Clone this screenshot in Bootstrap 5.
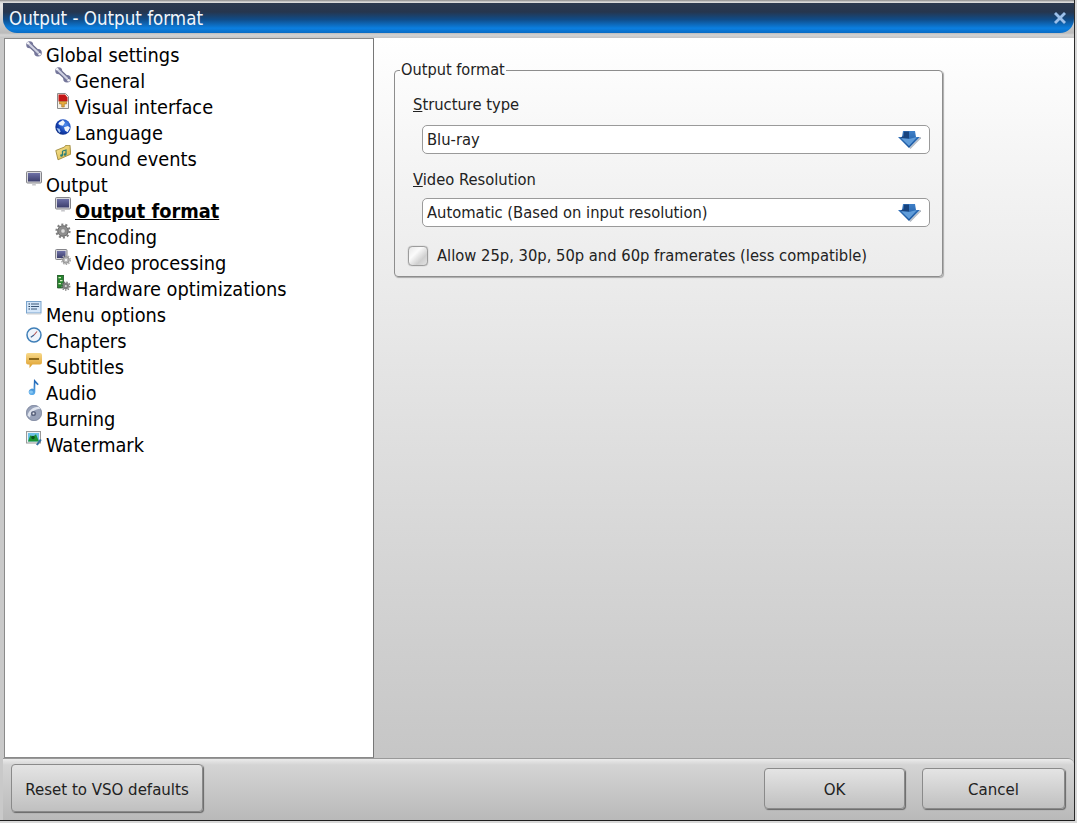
<!DOCTYPE html>
<html lang="en">
<head>
<meta charset="utf-8">
<title>Output - Output format</title>
<link href="https://cdn.jsdelivr.net/npm/bootstrap@5.3.0/dist/css/bootstrap.min.css" rel="stylesheet">
<style>
html,body{height:100%;overflow:hidden}
body{background:#d8d8d8;font-family:"DejaVu Sans Condensed","DejaVu Sans",sans-serif;color:#111}
.shell{width:1075px;height:821px;background:#c9c9c9;border-right:1px solid #2a2a2a;border-bottom:1px solid #1c1c1c}
.cap-wrap{height:38px;padding:3px 0 0 3px;background:linear-gradient(#8a8a8a 0,#d8d8d8 2px,#e6e6e6 5px,#bbb 33px,#d4d4d4 35px,#c4c4c4 38px)}
.cap{height:30px;border-radius:0 0 14px 14px;background:linear-gradient(#2c3a50 0,#26364e 30%,#104c88 55%,#0b7fe0 84%,#0a6cc4 100%);color:#f2f6fb;font-size:18.6px;padding:2px 6px 0 6px}
.closer{width:16px;height:16px;margin-top:-3px}
.mainrow{height:720px}
.treepane{width:370px;margin-left:4px;background:#fff;border:1px solid #8a8a8a;border-right:1px solid #777;padding-top:3px;font-size:19.8px;color:#000}
.treerow{height:26px;padding-left:21px;align-items:flex-start}
.treesub{padding-left:50px}
.treerow svg{width:16px;height:16px;margin-right:4px;margin-top:-1px;flex:none}
.treerow span{line-height:26px;margin-top:1px}
.cur{font-weight:700;text-decoration:underline;color:#000}
.sidepane{background:linear-gradient(#fff 0,#f3f3f3 20%,#c6c6c6 100%);padding:23px 0 0 20px}
.grp{width:549px;height:216px;border:1px solid #8d8d8d;border-radius:4px;box-shadow:1px 1px 1px #aaa;padding:0 13px 0 18px;margin:0;font-size:16.4px}
.grp legend{float:none;width:auto;font-size:16.2px;line-height:18px;margin:0 0 0 -13px;padding:0 1px;color:#222}
.fieldlabel{line-height:20px;color:#222}
.lab1{margin-top:16px}
.lab2{margin-top:16px}
.combo{height:29px;margin:10px 0 0 9px;border:1px solid #9a9a9a;border-radius:5px;background:#fff;padding:0 8px 0 4px;color:#222;min-height:0;width:508px}
.combo2{margin-top:8px}
.combotext{padding-top:1px;display:block}
.combo svg{width:24px;height:20px}
.chkline{margin:17px 0 0 -5px;gap:9px;color:#222}
.chkbox{width:20px;height:20px;margin:0;border:1.5px solid #9c9c9c;border-radius:4px;background:linear-gradient(135deg,#e6e6e6 0,#fbfbfb 35%,#cfcfcf 70%,#e2e2e2 100%);box-shadow:0 0 1px #888}
.bar{height:62px;background:linear-gradient(#ebebeb 0,#d4d4d4 6px,#b9b9b9 100%);border-top:1px solid #999;border-radius:0 6px 0 0;margin-left:3px;padding:0 9px 4px 8px}
.wbtn{font-size:16.7px;color:#222;background:linear-gradient(#e4e4e4,#c0c0c0);border:1px solid #8a8a8a;border-radius:4px;box-shadow:1px 1px 1px #666;padding:5px 0 0}
.wbtn:hover{background:linear-gradient(#e4e4e4,#c0c0c0);color:#222;border-color:#8a8a8a}
.reset{width:192px;height:48px}
.act{width:141px;height:41px;margin-top:2px;padding-top:3px}
.act2{width:143px}
.actgap{gap:17px}
</style>
</head>
<body>
<svg width="0" height="0" class="d-block position-absolute" aria-hidden="true">
<defs>
<linearGradient id="ga" x1="0" y1="0" x2="0" y2="1"><stop offset="0" stop-color="#3f80c8"/><stop offset="1" stop-color="#17539c"/></linearGradient>
<linearGradient id="gs" x1="0" y1="0" x2="0" y2="1"><stop offset="0" stop-color="#6d70a6"/><stop offset="1" stop-color="#3c3e6c"/></linearGradient>
<radialGradient id="gg" cx=".65" cy=".35" r=".8"><stop offset="0" stop-color="#4f8ef0"/><stop offset=".6" stop-color="#1440b0"/><stop offset="1" stop-color="#0b2470"/></radialGradient>
<linearGradient id="gf" x1="0" y1="0" x2="1" y2="1"><stop offset="0" stop-color="#f8e89a"/><stop offset="1" stop-color="#d8b040"/></linearGradient>
<linearGradient id="gb" x1="0" y1="0" x2="0" y2="1"><stop offset="0" stop-color="#f8d98a"/><stop offset="1" stop-color="#dc9c28"/></linearGradient>
<linearGradient id="gn" x1="0" y1="0" x2="0" y2="1"><stop offset="0" stop-color="#1a5fb0"/><stop offset="1" stop-color="#62b2ee"/></linearGradient>
<symbol id="wrench" viewBox="0 0 16 16"><path d="M3.500 3.500 12 11.500" stroke="#6a6c8c" stroke-width="4.600" stroke-linecap="round"/><circle cx="3.700" cy="3.700" r="3.500" fill="#74769a"/><circle cx="12" cy="11.800" r="3.800" fill="#74769a"/><path d="M3.500 3.500 12 11.500" stroke="#cfd1e2" stroke-width="2.200" stroke-linecap="round"/><circle cx="2.200" cy="2.200" r="1.300" fill="#f4f4f8"/><circle cx="13.600" cy="13.300" r="1.300" fill="#f4f4f8"/></symbol>
<symbol id="paint" viewBox="0 0 16 16"><path d="M2.500 .5h8l3 3v12h-11z" fill="#f4f0e8" stroke="#8d8d8d"/><path d="M3.500 1.500h6.500l2.500 3v4h-9z" fill="#c41616"/><path d="M4.500 8.500h7v2.500H9.300v3H6.700v-3H4.500z" fill="#e6aa3c" stroke="#95641a" stroke-width=".5"/></symbol>
<symbol id="globe" viewBox="0 0 16 16"><circle cx="8" cy="8" r="7.700" fill="url(#gg)"/><path d="M4 3.500 8 1l2 2.500-2 3.300L5.300 6.300 3.300 5zM9 8.300l4-1.300 2 1.700-2.500 4.500L10 11.500z" fill="#f0f5fc"/><path d="M1.500 9l3 .8 1.200 3-1.500 1z" fill="#a5c6f2"/></symbol>
<symbol id="folder" viewBox="0 0 16 16"><path d="M.8 5.500 9.500 2l1-1.500L15 .2l.7 9L3 14.800z" fill="url(#gf)" stroke="#9f8a3a" stroke-width=".9"/><path d="M7.500 6l3.500-1v4.500M7.500 6v4.500" stroke="#2b7f78" stroke-width="1.200" fill="none"/><circle cx="6.500" cy="10.500" r="1.300" fill="#2b7f78"/><circle cx="10" cy="9.500" r="1.300" fill="#2b7f78"/></symbol>
<symbol id="screen" viewBox="0 0 16 16"><rect x=".5" y=".5" width="15" height="11.500" rx="1" fill="#d8d8dc" stroke="#85858a"/><rect x="2" y="2" width="12" height="8.500" fill="url(#gs)"/><path d="M6.500 12h3l.5 2.500H6z" fill="#c6c6ca"/></symbol>
<symbol id="gear" viewBox="0 0 16 16"><circle cx="8" cy="8" r="5.300" fill="#8f8f8f" stroke="#666"/><circle cx="8" cy="8" r="6.400" fill="none" stroke="#808080" stroke-width="2.400" stroke-dasharray="2 1.960"/><circle cx="8" cy="8" r="2.200" fill="#dcdcdc" stroke="#777" stroke-width=".5"/></symbol>
<symbol id="screengear" viewBox="0 0 16 16"><rect x=".5" y=".5" width="11.500" height="10" rx="1" fill="#d8d8dc" stroke="#85858a"/><rect x="2" y="2" width="8.500" height="7" fill="url(#gs)"/><circle cx="11" cy="11" r="3.300" fill="#b6b6b6" stroke="#8b8b8b"/><circle cx="11" cy="11" r="4.300" fill="none" stroke="#a6a6a6" stroke-width="1.400" stroke-dasharray="1.500 1.200"/><circle cx="11" cy="11" r="1.200" fill="#f2f2f2"/></symbol>
<symbol id="chip" viewBox="0 0 16 16"><path d="M2.500 0h6v9l-1 4h-5z" fill="#27842f" stroke="#173f1b" stroke-width=".7"/><path d="M3.500 2h2.500v1.200H3.500zM5 5h2.500v1.200H5zM3.500 8H6v1.200H3.500z" fill="#d6ecbd"/><circle cx="10.800" cy="11" r="3.200" fill="#7e7e7e"/><circle cx="10.800" cy="11" r="4" fill="none" stroke="#777" stroke-width="1.300" stroke-dasharray="1.500 1.200"/><circle cx="10.800" cy="11" r="1.100" fill="#ddd"/></symbol>
<symbol id="menuic" viewBox="0 0 16 16"><rect x=".5" y=".5" width="14.500" height="11.500" fill="#d4e6f9" stroke="#7aa4cc"/><path d="M2.500 3h1.500M2.500 5.500h1.500M2.500 8h1.500" stroke="#24405f"/><path d="M5 3h8M5 5.500h8M5 8h6" stroke="#3c5878"/><path d="M1 13h14" stroke="#d0d0d0"/></symbol>
<symbol id="clock" viewBox="0 0 16 16"><circle cx="8" cy="8" r="7" fill="#eef4fb" stroke="#3f7fb8" stroke-width="1.500"/><path d="M8 8l3-3.500" stroke="#b05050" stroke-width="1.100"/><path d="M8 8 4.800 10.300" stroke="#3d5f8c" stroke-width="1.100"/></symbol>
<symbol id="bubble" viewBox="0 0 16 16"><path d="M2 0h12a2 2 0 0 1 2 2v7.500a2 2 0 0 1-2 2H6.500l-3 3.500v-3.500H2a2 2 0 0 1-2-2V2a2 2 0 0 1 2-2z" fill="url(#gb)"/><rect x="3" y="5" width="10" height="2" fill="#8a6618"/></symbol>
<symbol id="note" viewBox="0 0 16 16"><path d="M8 0l4.800 5.300-1.300 1L9.300 4v9a3.300 3.300 0 1 1-1.800-3z" fill="url(#gn)"/><ellipse cx="5" cy="13" rx="2" ry="1.500" fill="#86c6f2"/></symbol>
<symbol id="disc" viewBox="0 0 16 16"><circle cx="8" cy="8" r="7.700" fill="#98a2b9" stroke="#6e7892" stroke-width=".7"/><path d="M1.500 10.500C2.500 6 7 1.500 13 1.800l1.300 2C9 4 5 7 4 12.500z" fill="#e0e5ef"/><circle cx="7.500" cy="8.500" r="2.600" fill="#5f6882"/><circle cx="7.500" cy="8.500" r="1" fill="#e2e6ec"/></symbol>
<symbol id="water" viewBox="0 0 16 16"><rect x=".5" y=".5" width="14" height="11.500" fill="#eef3f6" stroke="#9a9a9a"/><rect x="2" y="2" width="11" height="8.500" fill="#6cc2e6"/><path d="M2 10.500l2.200-6 3.300.8 2.500-2 3 7.200z" fill="#1d9434"/><circle cx="7" cy="6.500" r="1.700" fill="#0a5218"/><path d="M10 13.500l4-5.500 1.700 1-4 5.500z" fill="#33709f"/></symbol>
<symbol id="drop" viewBox="0 0 24 20"><path d="M6 1h12l1 6h4L12 18 1 7h4z" fill="url(#ga)"/><path d="M7 1.500h5v7H3.500l1.500-2h1.500z" fill="#17437e"/><path d="M12 9l8-2-8 9-8-8z" fill="#6aa6e0" opacity=".85"/><path d="M13 18.500l11-11" stroke="#8b97a5" stroke-width="1.200" opacity=".7"/></symbol>
</defs>
</svg>
<div class="shell d-flex flex-column">
  <div class="cap-wrap">
    <div class="cap d-flex align-items-center justify-content-between">
      <span>Output - Output format</span>
      <svg class="closer" viewBox="0 0 16 16" aria-hidden="true"><path d="M2 4l2-2 4 4 4-4 2 2-4 4 4 4-2 2-4-4-4 4-2-2 4-4z" fill="#9cc0ea"/></svg>
    </div>
  </div>
  <div class="mainrow d-flex">
    <div class="treepane flex-shrink-0">
      <div class="treerow d-flex"><svg><use href="#wrench"/></svg><span>Global settings</span></div>
      <div class="treerow treesub d-flex"><svg><use href="#wrench"/></svg><span>General</span></div>
      <div class="treerow treesub d-flex"><svg><use href="#paint"/></svg><span>Visual interface</span></div>
      <div class="treerow treesub d-flex"><svg><use href="#globe"/></svg><span>Language</span></div>
      <div class="treerow treesub d-flex"><svg><use href="#folder"/></svg><span>Sound events</span></div>
      <div class="treerow d-flex"><svg><use href="#screen"/></svg><span>Output</span></div>
      <div class="treerow treesub d-flex"><svg><use href="#screen"/></svg><span class="cur">Output format</span></div>
      <div class="treerow treesub d-flex"><svg><use href="#gear"/></svg><span>Encoding</span></div>
      <div class="treerow treesub d-flex"><svg><use href="#screengear"/></svg><span>Video processing</span></div>
      <div class="treerow treesub d-flex"><svg><use href="#chip"/></svg><span>Hardware optimizations</span></div>
      <div class="treerow d-flex"><svg><use href="#menuic"/></svg><span>Menu options</span></div>
      <div class="treerow d-flex"><svg><use href="#clock"/></svg><span>Chapters</span></div>
      <div class="treerow d-flex"><svg><use href="#bubble"/></svg><span>Subtitles</span></div>
      <div class="treerow d-flex"><svg><use href="#note"/></svg><span>Audio</span></div>
      <div class="treerow d-flex"><svg><use href="#disc"/></svg><span>Burning</span></div>
      <div class="treerow d-flex"><svg><use href="#water"/></svg><span>Watermark</span></div>
    </div>
    <div class="sidepane flex-grow-1">
      <fieldset class="grp">
        <legend>Output format</legend>
        <div class="fieldlabel lab1"><u>S</u>tructure type</div>
        <div class="combo d-flex align-items-center justify-content-between"><span class="combotext">Blu-ray</span><svg><use href="#drop"/></svg></div>
        <div class="fieldlabel lab2"><u>V</u>ideo Resolution</div>
        <div class="combo combo2 d-flex align-items-center justify-content-between"><span class="combotext">Automatic (Based on input resolution)</span><svg><use href="#drop"/></svg></div>
        <label class="chkline d-flex align-items-center"><input class="chkbox form-check-input flex-shrink-0" type="checkbox"><span>Allow 25p, 30p, 50p and 60p framerates (less compatible)</span></label>
      </fieldset>
    </div>
  </div>
  <div class="bar d-flex align-items-center justify-content-between">
    <button type="button" class="btn wbtn reset">Reset to VSO defaults</button>
    <div class="d-flex actgap">
      <button type="button" class="btn wbtn act">OK</button>
      <button type="button" class="btn wbtn act act2">Cancel</button>
    </div>
  </div>
</div>
<script src="https://cdn.jsdelivr.net/npm/bootstrap@5.3.0/dist/js/bootstrap.bundle.min.js"></script>
</body>
</html>
